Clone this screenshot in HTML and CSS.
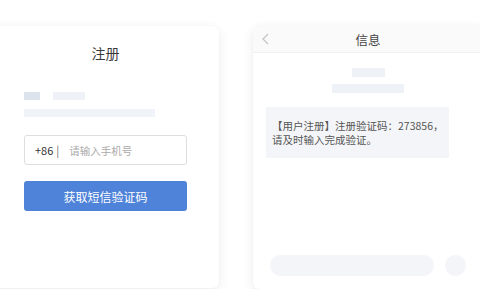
FILE: index.html
```html
<!DOCTYPE html>
<html lang="zh-CN">
<head>
<meta charset="UTF-8">
<title>注册 - 短信验证</title>
<link rel="stylesheet" href="styles.css">
</head>
<body>

<div class="stage">

  <div class="card signup">
    <h1 class="signup-title">注册</h1>

    <div class="skeleton-row">
      <span class="sk sk-tag"></span>
      <span class="sk sk-label"></span>
    </div>
    <div class="sk sk-line"></div>

    <div class="phone-field">
      <span class="prefix">+86</span>
      <span class="divider">|</span>
      <span class="placeholder">请输入手机号</span>
    </div>

    <button type="button" class="btn-primary">获取短信验证码</button>
  </div>

  <div class="card messages">
    <div class="msg-header">
      <svg class="back" width="7" height="12" viewBox="0 0 7 12">
        <path d="M6 1 L1 6 L6 11" fill="none" stroke="#c4c4c4" stroke-width="1.2"/>
      </svg>
      <span class="msg-title">信息</span>
    </div>

    <div class="msg-meta">
      <span class="sk sk-name"></span>
      <span class="sk sk-time"></span>
    </div>

    <div class="bubble">
      <div>【用户注册】注册验证码：273856，</div>
      <div>请及时输入完成验证。</div>
    </div>

    <div class="composer">
      <span class="composer-input"></span>
      <span class="composer-send"></span>
    </div>
  </div>

</div>

</body>
</html>
```

FILE: styles.css
```css
html, body {
    margin: 0;
    padding: 0;
    background: #fff;
    overflow: hidden;
}
body {
    font-family: "Noto Sans CJK SC", "Noto Sans", sans-serif;
    color: #333;
}
.stage {
    display: flex;
    gap: 34px;
    padding-top: 26px;
    margin-left: -20px;
    width: 520px;
}
.card {
    background: #fff;
    border-radius: 6px;
    box-shadow: 0 3px 12px rgba(0, 0, 0, 0.08), 0 0 2px rgba(0, 0, 0, 0.04);
    box-sizing: border-box;
}

/* left: signup form */
.signup {
    width: 239px;
    height: 262px;
    padding: 17px 32px 0 44px;
}
.signup-title {
    margin: 0;
    font-size: 14px;
    font-weight: normal;
    line-height: 20px;
    text-align: center;
    color: #3a3a3a;
}
.sk {
    display: block;
    background: #eef1f5;
}
.skeleton-row {
    display: flex;
    gap: 13px;
    margin-top: 29px;
}
.sk-tag {
    width: 16px;
    height: 8px;
    background: #dce3ec;
}
.sk-label {
    width: 32px;
    height: 8px;
}
.sk-line {
    width: 131px;
    height: 8px;
    margin-top: 9px;
    background: #f0f3f7;
}
.phone-field {
    display: flex;
    align-items: center;
    height: 28px;
    margin-top: 18px;
    border: 1px solid #dedede;
    border-radius: 3px;
    padding-left: 10px;
}
.prefix {
    font-size: 11px;
    color: #333;
}
.divider {
    margin-left: 3px;
    font-size: 11px;
    color: #666;
}
.placeholder {
    margin-left: 10px;
    font-size: 10.5px;
    color: #aaa;
}
.btn-primary {
    display: block;
    width: 163px;
    height: 30px;
    margin-top: 16px;
    border: 0;
    border-radius: 3px;
    background: #4e83d9;
    color: #fff;
    font-family: inherit;
    font-size: 12px;
}

/* right: sms screen */
.messages {
    width: 232px;
    height: 263px;
    display: flex;
    flex-direction: column;
    overflow: hidden;
}
.msg-header {
    position: relative;
    height: 26px;
    background: #fafafa;
    border-bottom: 1px solid #f1f1f1;
    display: flex;
    align-items: center;
    justify-content: center;
}
.back {
    position: absolute;
    left: 9px;
    top: 7px;
}
.msg-title {
    font-size: 12.5px;
    color: #444;
    margin-left: -2px;
}
.msg-meta {
    display: flex;
    flex-direction: column;
    align-items: center;
    gap: 7px;
    margin-top: 15px;
    margin-right: 2px;
}
.sk-name {
    width: 33px;
    height: 9px;
}
.sk-time {
    width: 72px;
    height: 9px;
}
.bubble {
    margin: 14px 0 0 13px;
    width: 183px;
    height: 51px;
    box-sizing: border-box;
    padding: 12px 0 0 6px;
    background: #f4f5f8;
    font-size: 10.5px;
    line-height: 14px;
    color: #555;
}
.composer {
    display: flex;
    gap: 11px;
    margin: auto 0 13px 17px;
}
.composer-input {
    width: 164px;
    height: 21px;
    border-radius: 11px;
    background: #f4f5f9;
}
.composer-send {
    width: 21px;
    height: 21px;
    border-radius: 50%;
    background: #f4f5f9;
}
```
